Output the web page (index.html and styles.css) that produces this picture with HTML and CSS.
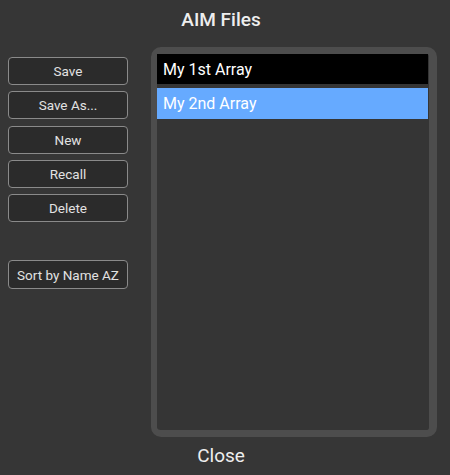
FILE: index.html
```html
<!DOCTYPE html>
<html>
<head>
<meta charset="utf-8">
<link rel="stylesheet" href="styles.css">
</head>
<body>
<div class="page">
  <h1 class="title">AIM Files</h1>
  <div class="main">
    <div class="actions">
      <button class="btn">Save</button>
      <button class="btn">Save As...</button>
      <button class="btn">New</button>
      <button class="btn">Recall</button>
      <button class="btn">Delete</button>
      <button class="btn btn-sort">Sort by Name AZ</button>
    </div>
    <div class="list-frame">
      <div class="list">
        <div class="row row-current">My 1st Array</div>
        <div class="row row-selected">My 2nd Array</div>
      </div>
    </div>
  </div>
  <div class="footer">Close</div>
</div>
</body>
</html>
```
FILE: styles.css
```css
html, body {
  margin: 0;
  padding: 0;
  background: #363636;
  width: 450px;
  height: 475px;
  overflow: hidden;
}
.page {
  width: 442px;
  font-family: Roboto, "Liberation Sans", sans-serif;
  color: #eeeeee;
}
.title {
  margin: 0;
  height: 40px;
  line-height: 40px;
  font-size: 19px;
  font-weight: 500;
  text-align: center;
}
.main {
  display: flex;
  margin-top: 7px;
}
.actions {
  display: flex;
  flex-direction: column;
  width: 120px;
  margin-left: 8px;
  padding-top: 10px;
  gap: 6.3px;
}
.btn {
  height: 28px;
  width: 120px;
  padding: 0;
  background: #2b2b2b;
  border: 1px solid #8a8a8a;
  border-radius: 4px;
  color: #e2e2e2;
  font-family: Roboto, "Liberation Sans", sans-serif;
  font-size: 13.5px;
  font-weight: 400;
}
.btn-sort {
  margin-top: 32px;
  height: 29px;
}
.list-frame {
  margin-left: 23px;
  width: 272px;
  height: 376px;
  border-style: solid;
  border-color: #4d4d4d;
  border-width: 7px 8px 7px 6px;
  border-radius: 10px;
  background: #353535;
}
.list {
  display: flex;
  flex-direction: column;
  gap: 4px;
  width: 271px;
}
.row {
  height: 30px;
  line-height: 31px;
  padding-left: 6px;
  font-size: 16px;
  color: #ffffff;
}
.row-current {
  background: #000000;
}
.row-selected {
  background: #66aaff;
  height: 31px;
}
.footer {
  height: 38px;
  line-height: 38px;
  text-align: center;
  font-size: 19px;
}
```
